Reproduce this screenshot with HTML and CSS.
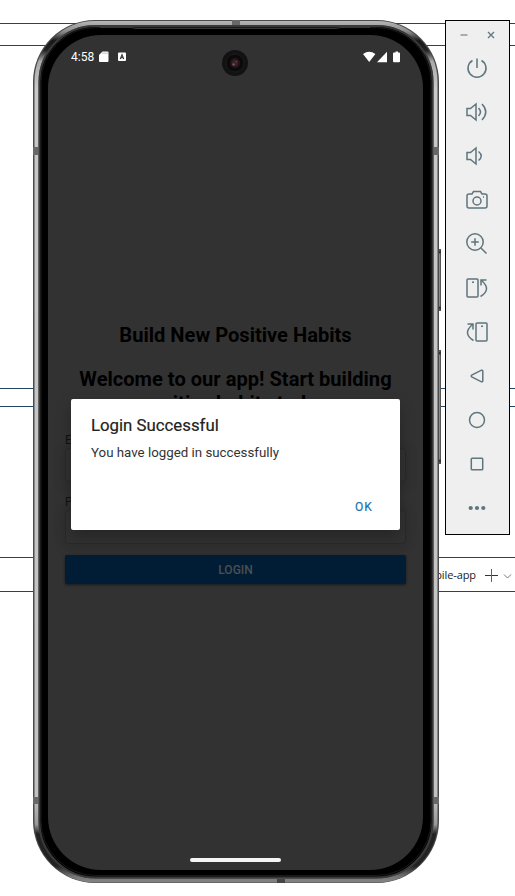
FILE: index.html
```html
<!DOCTYPE html>
<html lang="en">
<head>
<meta charset="utf-8">
<title>Build New Positive Habits</title>
<link rel="stylesheet" href="styles.css">
</head>
<body>
<div class="desktop">
  <div class="strip strip-top"></div>
  <div class="strip strip-middle"></div>
  <div class="strip strip-tabs">
    <span class="tab-name">mobile-app</span>
    <svg class="tab-icons" width="30" height="16" viewBox="0 0 30 16" fill="none"><path d="M1 8.500H14" stroke="#333"/><path d="M7.500 2V15" stroke="#77536c"/><path d="M20 7.500L23.500 11L27 7.500" stroke="#777"/></svg>
  </div>

  <div class="phone">
    <svg class="shell" width="410" height="866" viewBox="32 19 410 866" fill="none">
      <defs>
        <linearGradient id="metal" x1="0" y1="20" x2="0" y2="883" gradientUnits="userSpaceOnUse">
          <stop offset="0" stop-color="#bbb"/><stop offset=".014" stop-color="#888"/><stop offset=".024" stop-color="#181818"/><stop offset=".035" stop-color="#222"/><stop offset=".048" stop-color="#aaa"/><stop offset=".08" stop-color="#c8c8c8"/><stop offset=".9" stop-color="#c2c2c2"/><stop offset=".932" stop-color="#999"/><stop offset=".943" stop-color="#222"/><stop offset=".98" stop-color="#222"/><stop offset=".993" stop-color="#777"/><stop offset="1" stop-color="#858585"/>
        </linearGradient>
      </defs>
      <g fill="#8b8b8b" stroke="#555"><rect x="437.500" y="249.500" width="3" height="61"/><rect x="437.500" y="350.500" width="3" height="113"/></g>
      <path d="M438 252h3M438 308h3M438 353h3M438 461h3" stroke="#333" stroke-width="3"/>
      <rect x="33" y="20" width="406" height="863" rx="62" fill="#4a4a4a"/>
      <rect x="36.500" y="23" width="399" height="857.500" rx="59" stroke="url(#metal)" stroke-width="4"/>
      <rect x="39.500" y="26" width="393" height="851.500" rx="56" fill="#000" stroke="#383838" stroke-width="2"/>
      <rect x="41" y="27.500" width="390" height="848" rx="55" stroke="#181818"/>
      <path d="M100 27.500H129Q133 27.500 136 28.500H334Q337 28.500 341 27.500H370" stroke="#383838"/>
      <g fill="#686868"><rect x="232" y="20" width="8" height="5"/><rect x="33" y="147" width="5" height="8"/><rect x="434" y="147" width="5" height="8"/><rect x="33" y="797" width="5" height="7"/><rect x="434" y="797" width="5" height="7"/></g>
      <rect x="277" y="879" width="8" height="4" fill="#444"/>
    </svg>
    <main class="screen">
      <header class="status">
        <span class="clock">4:58</span>
        <svg class="status-left" width="28" height="12" viewBox="0 0 28 12"><path d="M3.500 .500H8.500Q9.500 .500 9.500 1.500V10Q9.500 11 8.500 11H1Q0 11 0 10V4Z" fill="#fff"/><path d="M4 1.500v1.500M6 1.500v1.500M8 1.500v1.500" stroke="#777" stroke-width=".6"/><rect x="19" y="1.500" width="8" height="8.500" rx="1" fill="#fff"/><path d="M21.300 8L23 3.800L24.700 8M22 6.700H24" fill="none" stroke="#333" stroke-width="1.100"/></svg>
        <svg class="status-right" width="37" height="12" viewBox="0 0 37 12" fill="#fff"><path d="M0 3Q6.200-1.500 12.400 3L6.200 11Z"/><path d="M14 11.200L24 .800V11.200Z"/><path d="M31 1.500H32.500V.500H35V1.500H36Q37 1.500 37 2.500V10.300Q37 11.300 36 11.300H31Q30 11.300 30 10.300V2.500Q30 1.500 31 1.500Z"/></svg>
      </header>
      <svg class="camera" width="28" height="28" viewBox="0 0 28 28"><circle cx="14" cy="14" r="13" fill="#121212"/><circle cx="14" cy="14" r="9" fill="#0a0a0a" stroke="#1c1c1c"/><circle cx="14" cy="14" r="5" fill="#24171a"/><circle cx="14" cy="14" r="3" fill="#3c2327"/><circle cx="12.500" cy="15.500" r="1.200" fill="#765058"/><circle cx="15.500" cy="12.500" r=".8" fill="#6a454c"/></svg>
      <section class="app">
        <h1 class="title">Build New Positive Habits</h1>
        <h2 class="welcome">Welcome to our app! Start building positive habits today.</h2>
        <form class="form">
          <div class="field"><span class="label">Email</span><div class="input"></div></div>
          <div class="field"><span class="label">Password</span><div class="input"></div></div>
          <div class="login">LOGIN</div>
        </form>
      </section>
      <div class="home-bar"></div>
      <section class="dialog">
        <h3 class="dialog-title">Login Successful</h3>
        <p class="dialog-text">You have logged in successfully</p>
        <div class="dialog-ok">OK</div>
      </section>
    </main>
  </div>

  <aside class="tools">
    <div class="window-buttons">
      <svg width="10" height="10" viewBox="0 0 10 10"><path d="M1.500 5H8.500" stroke="#899ba0" stroke-width="1.500"/></svg>
      <svg width="10" height="10" viewBox="0 0 10 10"><path d="M2 2L8 8M8 2L2 8" stroke="#60777e" stroke-width="1.300"/></svg>
    </div>
    <svg class="tool" viewBox="0 0 24 24"><path d="M12 2.500V12M7.500 4.500A9 9 0 1 0 16.500 4.500"/></svg>
    <svg class="tool" viewBox="0 0 24 24"><path d="M2 8.500H5.500L11 4V20L5.500 15.500H2ZM13.500 8Q17.500 12 13.500 16M17 4Q24.500 12 17 20"/></svg>
    <svg class="tool" viewBox="0 0 24 24"><path d="M2 8.500H5.500L11 4V20L5.500 15.500H2ZM13.500 7.500Q19 12 13.500 16.500"/></svg>
    <svg class="tool" viewBox="0 0 24 24"><path d="M4 6H7L8.500 3.500H15.500L17 6H20Q22 6 22 8V18Q22 20 20 20H4Q2 20 2 18V8Q2 6 4 6Z"/><circle cx="12" cy="13" r="4"/><path d="M18 9H19"/></svg>
    <svg class="tool" viewBox="0 0 24 24"><circle cx="10" cy="10" r="8.200"/><path d="M15.700 15.700L21.500 21.500M10 6.200V13.800M6.200 10H13.800"/></svg>
    <svg class="tool" viewBox="0 0 24 24"><rect x="2" y="3" width="11" height="18" rx="1"/><path d="M7 6.300H9M15.500 20.500Q27 13.500 16.500 4.500M16 9.500V4H21.500"/></svg>
    <svg class="tool" viewBox="0 0 24 24"><rect x="11" y="3" width="11" height="18" rx="1"/><path d="M16 6.300H18M8.500 20.500Q-3 13.500 7.500 4.500M8 9.500V4H2.500"/></svg>
    <svg class="tool" viewBox="0 0 24 24"><path d="M6.700 11.200L16.500 6.200Q17.800 6 17.800 7.200V16.800Q17.800 18 16.500 17.800L6.700 12.800Q5.700 12 6.700 11.200Z"/></svg>
    <svg class="tool" viewBox="0 0 24 24"><circle cx="12" cy="12" r="7.500"/></svg>
    <svg class="tool" viewBox="0 0 24 24"><rect x="6.300" y="6.300" width="11.400" height="11.400" rx=".8"/></svg>
    <svg class="tool" viewBox="0 0 24 24"><g fill="#5e767e" stroke="none"><circle cx="5.700" cy="12" r="2.100"/><circle cx="12" cy="12" r="2.100"/><circle cx="18.300" cy="12" r="2.100"/></g></svg>
  </aside>
</div>
</body>
</html>
```
FILE: styles.css
```css
* { box-sizing: border-box; }
body { margin: 0; background: #fff; font-family: Roboto, sans-serif; }
.desktop { position: relative; width: 515px; height: 896px; overflow: hidden; padding-top: 23px; }
.strip { border-top: 1px solid #204665; border-bottom: 1px solid #204665; }
.strip-top { height: 23px; }
.strip-middle { height: 19px; margin-top: 342px; }
.strip-tabs { height: 35px; margin-top: 150px; display: flex; align-items: center; justify-content: flex-end; padding-right: 1px; }
.tab-name { font: 11px "Open Sans", sans-serif; color: #222; margin-right: 8px; letter-spacing: -.1px; }
.phone { position: absolute; left: 32px; top: 19px; width: 410px; height: 866px; padding: 16px; }
.shell { position: absolute; left: 0; top: 0; }
.screen { position: relative; width: 375px; height: 835px; border-radius: 53px; background: #323232; overflow: hidden; display: flex; flex-direction: column; }
.status { height: 44px; display: flex; align-items: center; padding: 0 23px; color: #fff; }
.clock { font-size: 12px; line-height: 16px; width: 28px; }
.status-right { margin-left: auto; }
.camera { position: absolute; left: 173px; top: 14px; }
.app { padding: 244px 17px 0 17px; }
.title, .welcome { margin: 0; text-align: center; font-size: 20.100px; line-height: 24px; font-weight: 700; color: #000; }
.welcome { margin: 20px -5px 0; line-height: 24px; }
.form { margin-top: 6px; }
.field { height: 62px; padding-top: 12px; }
.label { display: block; font-size: 12px; line-height: 14px; height: 15px; color: #111; }
.input { height: 34px; border: 1px solid #292929; border-radius: 4px; box-shadow: 0 2px 10px 5px rgba(0,0,0,.06); }
.login { margin-top: 10px; height: 29px; border-radius: 2px; background: #001d35; box-shadow: 0 1px 3px rgba(0,0,0,.5); color: #4c4f52; font-size: 12px; font-weight: 500; line-height: 31px; text-align: center; }
.home-bar { width: 91px; height: 4px; border-radius: 2px; background: #f5f5f5; margin: auto auto 8px 142px; }
.dialog { position: absolute; left: 22.500px; top: 364px; width: 329.500px; height: 131px; background: #fff; border-radius: 2px; padding: 15px 27px 0 20.500px; box-shadow: 0 8px 16px rgba(0,0,0,.25); color: #222; }
.dialog-title { margin: 0; font-size: 16.800px; line-height: 22px; font-weight: 400; -webkit-text-stroke: .2px #222; }
.dialog-text { margin: 7px 0 0; font-size: 13.300px; line-height: 20px; color: #333; }
.dialog-ok { margin-top: 34px; text-align: right; font-size: 12px; line-height: 20px; font-weight: 400; letter-spacing: 1.100px; color: #2073b1; -webkit-text-stroke: .2px #2073b1; }
.tools { position: absolute; left: 445px; top: 20px; width: 65px; height: 515px; border: 1px solid #000; background: #efefef; display: flex; flex-direction: column; align-items: center; padding-right: 1px; }
.window-buttons { height: 24px; margin: 2px 0 0 1px; display: flex; align-items: center; gap: 17px; flex: none; }
.tool { width: 24px; height: 24px; flex: none; margin: 9px 0 11px; fill: none; stroke: #5e767e; stroke-width: 1.500; }
```
